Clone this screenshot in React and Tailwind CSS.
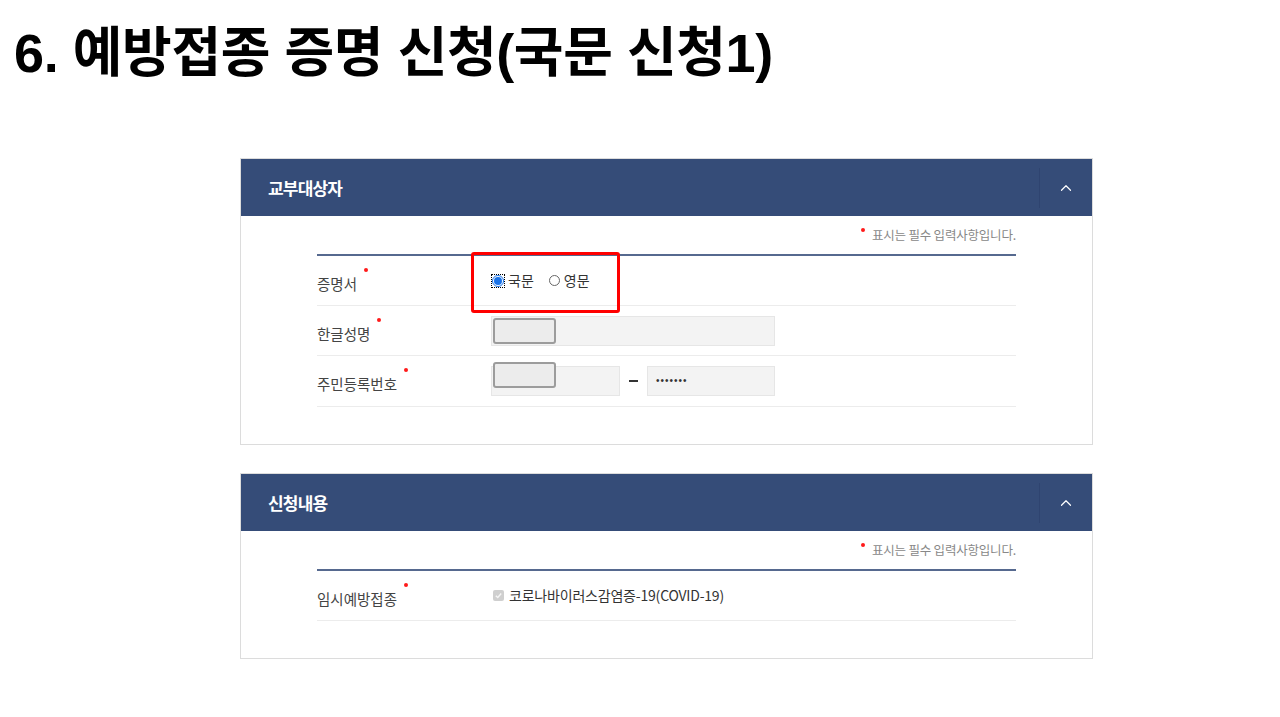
import { ChevronUp } from 'lucide-react';

const kr = { fontFamily: '"Noto Sans CJK KR", "Noto Sans", sans-serif' };

function Req() {
  return <span className="ml-[7px] inline-block h-[4px] w-[4px] -translate-y-[5px] rounded-full bg-[#ff1a1a] align-top" />;
}

function PanelHeader({ title }) {
  return (
    <div className="flex h-[57px] items-center bg-[#354c78]">
      <div className="flex-1 pl-[27px] text-[17px] font-bold tracking-[-0.8px] text-white" style={kr}>
        {title}
      </div>
      <div className="flex h-[40px] w-[53px] items-center justify-center border-l border-[#2f4470]">
        <ChevronUp className="h-[18px] w-[18px] text-white" strokeWidth={1.6} />
      </div>
    </div>
  );
}

function Note() {
  return (
    <div className="flex items-center justify-end pt-[10px] text-[12.5px] leading-[18px] tracking-[-0.2px] text-[#888]" style={kr}>
      <span className="mr-[7px] mt-[-10px] inline-block h-[4px] w-[4px] rounded-full bg-[#ff1a1a]" />
      표시는 필수 입력사항입니다.
    </div>
  );
}

function Row({ label, children, h = 'h-[50px]' }) {
  return (
    <div className={`flex ${h} items-center border-b border-[#ececec]`}>
      <div className="w-[174px] pt-[6px] text-[14.5px] text-[#444]" style={kr}>
        {label}
        <Req />
      </div>
      <div className="flex flex-1 items-center">{children}</div>
    </div>
  );
}

export default function App() {
  return (
    <div className="min-h-screen bg-white">
      <h1
        className="pl-[14px] pt-[23px] text-[54px] font-bold leading-[60px] tracking-[-0.4px] text-black"
        style={{ fontFamily: '"Liberation Sans", "Noto Sans CJK KR", sans-serif' }}
      >
        6. 예방접종 증명 신청(국문 신청1)
      </h1>

      <div className="ml-[240px] mt-[75px] w-[853px] border border-[#dcdcdc]">
        <PanelHeader title="교부대상자" />
        <div className="px-[76px] pb-[37px]">
          <Note />
          <div className="mt-[10px] border-t-2 border-[#56698f]">
            <Row label="증명서">
              <div className="relative flex items-center text-[14px] text-[#333]" style={kr}>
                <div className="absolute -left-[20px] -top-[18px] h-[61px] w-[149px] rounded-[3px] border-[3px] border-[#ff0000]" />
                <span className="mr-[3px] flex h-[14px] w-[14px] items-center justify-center border border-dotted border-black">
                  <span className="flex h-[12px] w-[12px] items-center justify-center rounded-full border border-[#1a73e8]">
                    <span className="h-[8px] w-[8px] rounded-full bg-[#1a73e8]" />
                  </span>
                </span>
                국문
                <span className="ml-[15px] mr-[4px] h-[11px] w-[11px] rounded-full border border-[#666]" />
                영문
              </div>
            </Row>
            <Row label="한글성명">
              <div className="relative flex h-[30px] w-[284px] items-center border border-[#e6e6e6] bg-[#f3f3f3]">
                <span className="absolute left-[1px] h-[26px] w-[63px] rounded-[3px] border-2 border-[#9c9c9c] bg-[#ececec]" />
              </div>
            </Row>
            <Row label="주민등록번호" h="h-[51px]">
              <div className="relative flex h-[30px] w-[129px] items-start border border-[#e6e6e6] bg-[#f3f3f3]">
                <span className="absolute -top-[5px] left-[1px] h-[26px] w-[63px] rounded-[3px] border-2 border-[#9c9c9c] bg-[#ececec]" />
              </div>
              <span className="mx-[9px] h-[2px] w-[9px] bg-[#333]" />
              <div
                className="flex h-[30px] w-[128px] items-center border border-[#e6e6e6] bg-[#f3f3f3] pl-[8px] text-[10px] leading-none tracking-[1px] text-[#333]"
                style={{ fontFamily: '"Liberation Sans", sans-serif' }}
              >
                •••••••
              </div>
            </Row>
          </div>
        </div>
      </div>

      <div className="ml-[240px] mt-[28px] w-[853px] border border-[#dcdcdc]">
        <PanelHeader title="신청내용" />
        <div className="px-[76px] pb-[37px]">
          <Note />
          <div className="mt-[10px] border-t-2 border-[#56698f]">
            <Row label="임시예방접종">
              <div className="flex items-center text-[14px] tracking-[-0.2px] text-[#333]" style={kr}>
                <span className="ml-[2px] mr-[5px] flex h-[11px] w-[11px] items-center justify-center rounded-[2px] bg-[#cfcfcf]">
                  <svg viewBox="0 0 10 10" className="h-[9px] w-[9px]">
                    <path d="M2 5.2 L4.2 7.3 L8 2.8" fill="none" stroke="#f5f5f5" strokeWidth="1.6" />
                  </svg>
                </span>
                코로나바이러스감염증-19(COVID-19)
              </div>
            </Row>
          </div>
        </div>
      </div>
    </div>
  );
}
